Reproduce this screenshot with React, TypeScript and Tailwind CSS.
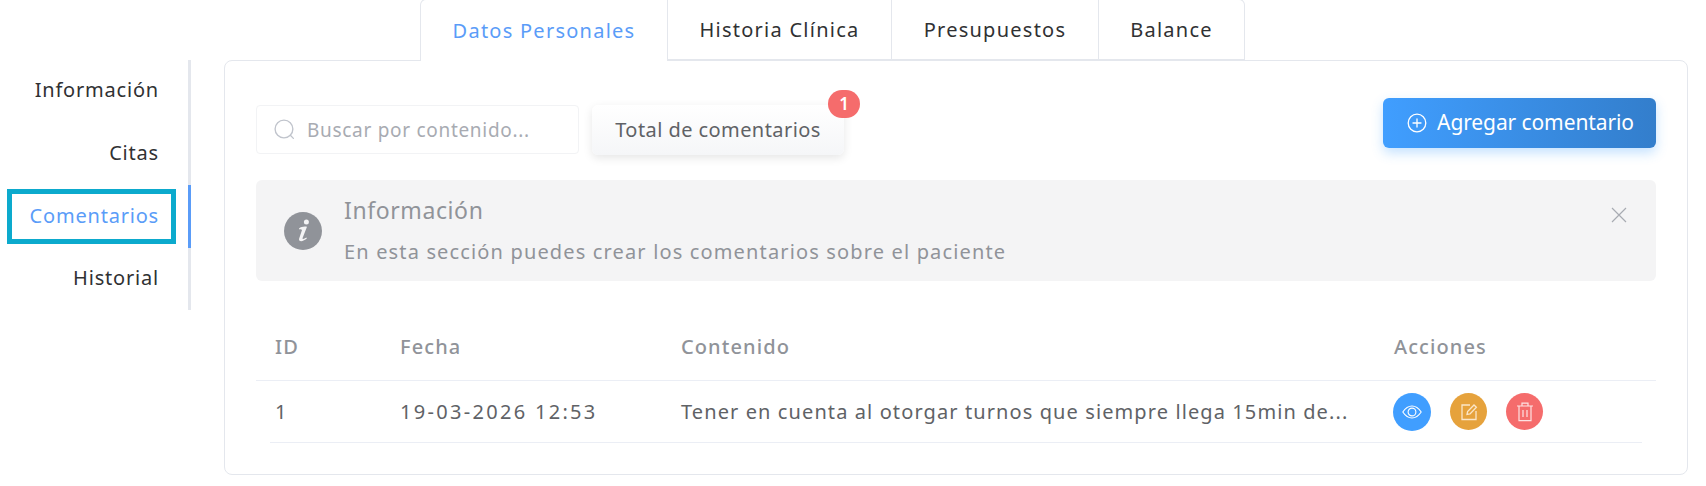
import React from "react";

const SearchIcon = () => (
  <svg width="23" height="23" viewBox="0 0 22 22" fill="none" stroke="#c0c4cc" strokeWidth="1.3" strokeLinecap="round">
    <circle cx="10.5" cy="10.5" r="8.5" />
    <path d="M16.6 16.6 L19.5 19.5" />
  </svg>
);

const PlusCircle = () => (
  <svg width="20" height="20" viewBox="0 0 20 20" fill="none" stroke="#fff" strokeWidth="1.3" strokeLinecap="round">
    <circle cx="10" cy="10" r="8.8" />
    <path d="M10 6v8M6 10h8" />
  </svg>
);

const CloseIcon = () => (
  <svg width="18" height="18" viewBox="0 0 18 18" fill="none" stroke="#a8abb2" strokeWidth="1.2">
    <path d="M2 2 L16 16 M16 2 L2 16" />
  </svg>
);

const InfoIcon = () => (
  <svg width="38" height="38" viewBox="0 0 38 38" className="shrink-0">
    <circle cx="19" cy="19" r="19" fill="#909399" />
    <circle cx="22.4" cy="10" r="2.5" fill="#f4f4f5" />
    <path
      d="M15 16.5 C17 15 20 14.2 23 14.8 L18.6 26 C18.3 27.2 19.5 27.5 22.5 25.6 L22.8 26.6 C20 29.2 14.8 30.6 15 27 L18 18 C17.5 17 16 17.2 15.3 17.5 Z"
      fill="#f4f4f5"
    />
  </svg>
);

const EyeIcon = () => (
  <svg width="20" height="20" viewBox="0 0 20 20" fill="none" stroke="#fff" strokeWidth="1.1">
    <path d="M0.8 10 C4 5.2 7 4 10 4 C13 4 16 5.2 19.2 10 C16 14.8 13 16 10 16 C7 16 4 14.8 0.8 10 Z" />
    <circle cx="10" cy="10" r="3.9" />
  </svg>
);

const EditIcon = () => (
  <svg width="18" height="18" viewBox="0 0 18 18" fill="none" stroke="#fbe6c8" strokeWidth="1.3">
    <path d="M10 2 H2 V16.5 H16 V8" />
    <path d="M7 11.5 L7.6 8.6 L14 2 L16.4 4.3 L10 10.9 Z" />
  </svg>
);

const TrashIcon = () => (
  <svg width="18" height="20" viewBox="0 0 18 20" fill="none" stroke="#fde2e2" strokeWidth="1.2">
    <path d="M1 4 H17 M6 4 V1.2 H12 V4 M3 4 V18.6 H15 V4 M7 8 V15 M11 8 V15" />
  </svg>
);

const sideItems = ["Información", "Citas", "Comentarios", "Historial"];
const tabs = ["Datos Personales", "Historia Clínica", "Presupuestos", "Balance"];
const tabWidths = ["w-[248px]", "w-[224px]", "w-[207px]", "w-[146px]"];

export default function App() {
  return (
    <div
      className="relative flex h-[486px] w-[1706px] overflow-hidden bg-white pr-[18px] text-[#303133]"
      style={{ fontFamily: '"Noto Sans", "Lato", sans-serif' }}
    >
      <div className="mt-[60px] flex h-[250px] w-[191px] shrink-0 flex-col border-r-[3px] border-[#e4e7ed] text-[20px] tracking-[0.8px]">
        {sideItems.map((s) => (
          <div
            key={s}
            className={
              s === "Comentarios"
                ? "-mr-[3px] flex h-[62.5px] items-center justify-end border-r-[3px] border-[#5a9cf8] pr-[29px] text-[#5a9cf8]"
                : "flex h-[62.5px] items-center justify-end pb-[2px] pr-[29px]"
            }
          >
            {s}
          </div>
        ))}
      </div>

      <div className="ml-[33px] flex flex-1 flex-col">
        <div className="relative z-10 -mt-px ml-[196px] flex h-[61px] text-[20px] tracking-[1.25px]">
          {tabs.map((t, i) => (
            <div
              key={t}
              className={
                (i === 0
                  ? "-mb-px h-[62px] rounded-tl-md border-x border-t border-[#e4e7ed] bg-white text-[#5a9cf8] "
                  : i === 3
                    ? "h-[61px] rounded-tr-md border-r border-t border-b border-[#e4e7ed] "
                    : "h-[61px] border-r border-t border-b border-[#e4e7ed] ") +
                tabWidths[i] +
                " flex items-center justify-center"
              }
            >
              {t}
            </div>
          ))}
        </div>

        <div className="h-[415px] rounded-b-lg rounded-t-lg border border-[#e4e7ed] px-[31px] pt-[37px]">
          <div className="flex h-[57px] items-start justify-between">
            <div className="mt-[7px] flex gap-[13px]">
              <div className="flex h-[49px] w-[323px] items-center gap-[11px] rounded border border-[#f2f3f5] pl-[16px] text-[19px] tracking-[0.7px] text-[#a8abb2]">
                <SearchIcon />
                <span className="pt-px">Buscar por contenido...</span>
              </div>
              <div className="relative flex h-[50px] w-[252px] items-center justify-center rounded-md bg-gradient-to-b from-white to-[#f5f6f8] pb-px text-[20px] tracking-[0.43px] text-[#606266] shadow-[0_3px_10px_rgba(0,0,0,0.1)]">
                Total de comentarios
                <span className="absolute -right-[16px] -top-[15px] flex h-[28px] w-[32px] items-center justify-center rounded-full bg-[#f56c6c] text-[17px] font-semibold tracking-normal text-white">
                  1
                </span>
              </div>
            </div>
            <div className="flex h-[50px] w-[273px] items-center justify-center gap-[10px] rounded-md bg-gradient-to-r from-[#409eff] to-[#337ecc] pl-[2px] text-[21px] tracking-[-0.1px] text-white shadow-[0_5px_12px_rgba(64,158,255,0.3)]">
              <PlusCircle />
              <span>Agregar comentario</span>
            </div>
          </div>

          <div className="mt-[25px] flex h-[101px] items-center rounded-md bg-[#f4f4f5] pl-[28px] pr-[28px] text-[#909399]">
            <InfoIcon />
            <div className="ml-[22px] flex flex-1 flex-col gap-[13px]">
              <div className="text-[23px] leading-[30px] tracking-[0.6px]">Información</div>
              <div className="text-[20px] leading-[28px] tracking-[1.15px]">
                En esta sección puedes crear los comentarios sobre el paciente
              </div>
            </div>
            <div className="mb-[31px] self-center pr-0">
              <CloseIcon />
            </div>
          </div>

          <div className="mt-[32px] grid h-[68px] grid-cols-[125px_281px_713px_1fr] items-center border-b border-[#ebeef5] pl-[19px] text-[20px] font-medium tracking-[1.1px] text-[#909399]">
            <div>ID</div>
            <div>Fecha</div>
            <div>Contenido</div>
            <div>Acciones</div>
          </div>
          <div className="mx-[14px] grid h-[62px] grid-cols-[125px_281px_713px_1fr] items-center border-b border-[#ebeef5] pl-[5px] text-[20px] tracking-[1.1px] text-[#606266]">
            <div>1</div>
            <div className="tracking-[2.3px]">19-03-2026 12:53</div>
            <div className="whitespace-nowrap">Tener en cuenta al otorgar turnos que siempre llega 15min de...</div>
            <div className="-ml-[1px] flex items-center gap-[19px]">
              <div className="flex h-[38px] w-[38px] items-center justify-center rounded-full bg-[#409eff]">
                <EyeIcon />
              </div>
              <div className="flex h-[37px] w-[37px] items-center justify-center rounded-full bg-[#e6a23c]">
                <EditIcon />
              </div>
              <div className="flex h-[37px] w-[37px] items-center justify-center rounded-full bg-[#f56c6c]">
                <TrashIcon />
              </div>
            </div>
          </div>
        </div>
      </div>

      <div className="absolute left-[7px] top-[189px] h-[55px] w-[169px] border-[5px] border-[#0caacd]" />
    </div>
  );
}
